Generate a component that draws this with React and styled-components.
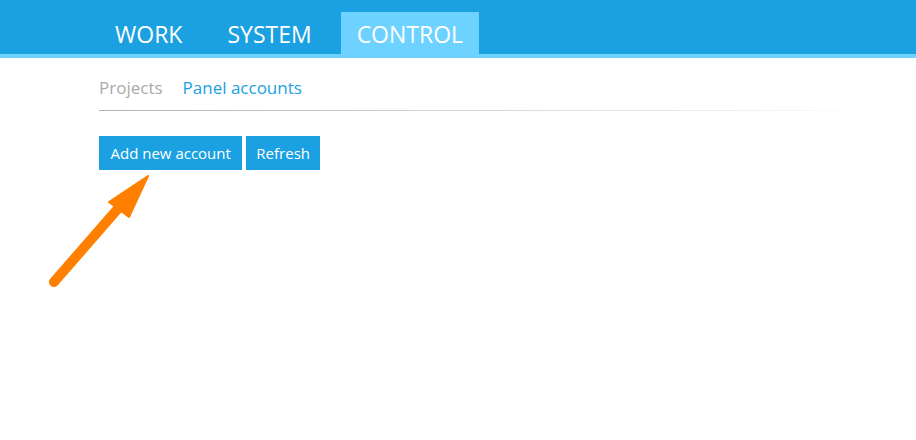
import styled, { createGlobalStyle } from 'styled-components';

const GlobalStyle = createGlobalStyle`
  body {
    margin: 0;
    background: #fff;
    font-family: "Open Sans", "Noto Sans", sans-serif;
  }
`;

const Page = styled.div`
  position: relative;
  width: 916px;
  height: 440px;
  overflow: hidden;
`;

const Header = styled.header`
  background: #1ba1e2;
  height: 54px;
  border-bottom: 4px solid #6dd2ff;
  display: flex;
  align-items: flex-end;
  gap: 13px;
  padding-left: 99px;
`;

const Tab = styled.a`
  height: 42px;
  display: flex;
  align-items: center;
  padding: 2px 16px 0;
  box-sizing: border-box;
  font-size: 23px;
  color: #fff;
  text-transform: uppercase;
  text-decoration: none;
  background: ${({ $active }) => ($active ? '#6dd2ff' : 'transparent')};
`;

const Content = styled.main`
  padding: 0 36px 0 99px;
`;

const SubNav = styled.nav`
  display: flex;
  gap: 20px;
  height: 53px;
  box-sizing: border-box;
  padding-top: 6px;
  align-items: center;
  border-bottom: 1px solid transparent;
  border-image: linear-gradient(to right, #b3b3b3, #e6e6e6 70%, #ffffff) 1;
`;

const SubLink = styled.a`
  font-size: 17px;
  color: ${({ $active }) => ($active ? '#1ba1e2' : '#aaaaaa')};
  text-decoration: none;
`;

const Toolbar = styled.div`
  display: flex;
  gap: 4px;
  margin-top: 25px;
`;

const Button = styled.button`
  height: 34px;
  padding: 0 ${({ $wide }) => ($wide ? '11.5px' : '10px')};
  border: none;
  background: #1ba1e2;
  color: #fff;
  font-family: inherit;
  font-size: 15px;
  cursor: pointer;
`;

const Arrow = styled.svg`
  position: absolute;
  left: 0;
  top: 0;
  pointer-events: none;
`;

export default function App() {
  return (
    <Page>
      <GlobalStyle />
      <Header>
        <Tab>Work</Tab>
        <Tab>System</Tab>
        <Tab $active>Control</Tab>
      </Header>
      <Content>
        <SubNav>
          <SubLink>Projects</SubLink>
          <SubLink $active>Panel accounts</SubLink>
        </SubNav>
        <Toolbar>
          <Button $wide>Add new account</Button>
          <Button>Refresh</Button>
        </Toolbar>
      </Content>
      <Arrow width="916" height="440" viewBox="0 0 916 440">
        <line x1="54" y1="282" x2="122" y2="204" stroke="#ff8000" strokeWidth="10" strokeLinecap="round" />
        <polygon points="148,176 109,202 129,217" fill="#ff8000" stroke="#ff8000" strokeWidth="2" strokeLinejoin="round" />
      </Arrow>
    </Page>
  );
}
